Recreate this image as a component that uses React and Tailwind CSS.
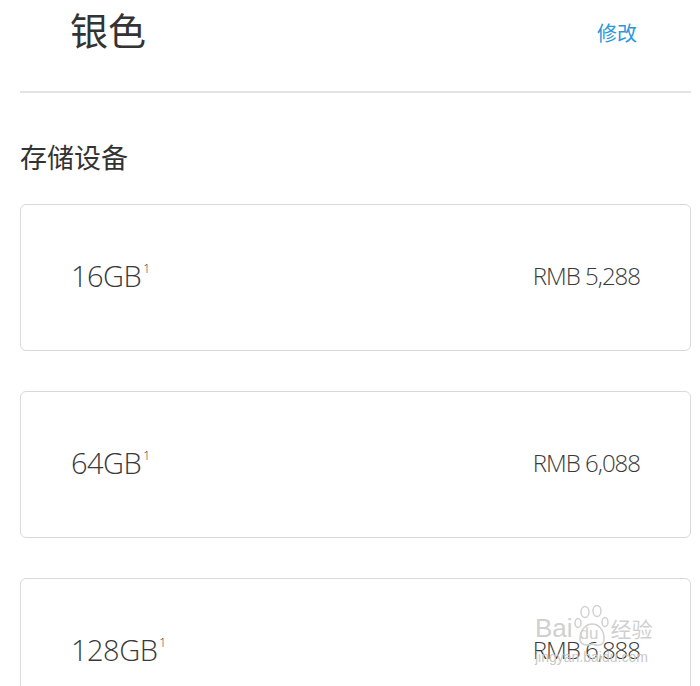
import React from "react";

const cjk = { fontFamily: '"Noto Sans CJK SC", "Noto Sans", sans-serif' };
const thin = { fontFamily: '"Open Sans", "Noto Sans", sans-serif' };

const options = [
    { size: "16GB", price: "RMB 5,288" },
    { size: "64GB", price: "RMB 6,088" },
    { size: "128GB", price: "RMB 6,888" },
];

const StorageCard = ({ size, price }) => (
    <div className="flex h-[147px] items-center justify-between rounded-[6px] border border-[#d9d9d9] pb-[4px] pl-[50px] pr-[50px] text-[#3a3a3a]" style={thin}>
        <div className="flex items-start font-light">
            <span className="text-[29px] leading-[30px] tracking-[-0.5px]">{size}</span>
            <span className="ml-[2px] mt-[2px] text-[12px] leading-[12px]">1</span>
        </div>
        <span className="text-[24px] font-light leading-[26px] tracking-[-1px]">{price}</span>
    </div>
);

// faint Baidu jingyan watermark lying over the last card
const Watermark = () => (
    <div className="pointer-events-none absolute left-[535px] top-[604px] flex flex-col text-[#d0d0d0]" style={{ fontFamily: '"Liberation Sans", "Noto Sans CJK SC", sans-serif' }}>
        <div className="flex items-end">
            <span className="text-[26px] leading-[40px]">Bai</span>
            <div className="relative mx-[1px] h-[44px] w-[36px]">
                <svg viewBox="0 0 36 44" className="absolute inset-0 h-full w-full" fill="none" stroke="#d0d0d0" strokeWidth="1.5">
                    <ellipse cx="11" cy="8" rx="4" ry="5.5" />
                    <ellipse cx="23" cy="7" rx="4" ry="5.5" />
                    <ellipse cx="4" cy="19" rx="3" ry="4.5" />
                    <ellipse cx="31" cy="18" rx="3" ry="4.5" />
                    <path d="M6 35 C6 26 12 20 18 20 C25 20 30 26 30 35 C30 42 24 42 18 40 C12 42 6 41 6 35 Z" />
                </svg>
                <span className="absolute bottom-[6px] left-[6px] text-[17px] leading-[17px]">du</span>
            </div>
            <span className="text-[21px] leading-[40px]" style={cjk}>经验</span>
        </div>
        <span className="mt-[2px] text-[14px] leading-[14px] text-[#c8c8c8]">jingyan.baidu.com</span>
    </div>
);

const App = () => {
    return (
        <div className="relative h-[686px] overflow-hidden bg-white pl-[20px] pr-[9px]">
            <div className="flex h-[93px] justify-between border-b-2 border-[#e4e4e4] pl-[50px] pr-[54px]" style={cjk}>
                <h1 className="mt-[10px] text-[38px] leading-[38px] text-[#333]">银色</h1>
                <a className="mt-[23px] text-[20px] leading-[20px] text-[#2b97dc]">修改</a>
            </div>

            <h2 className="mt-[50px] text-[27px] leading-[27px] text-[#333]" style={cjk}>存储设备</h2>

            <div className="mt-[34px] flex flex-col gap-[40px]">
                {options.map((o) => (
                    <StorageCard key={o.size} size={o.size} price={o.price} />
                ))}
            </div>

            <Watermark />
        </div>
    );
};

export default App;
